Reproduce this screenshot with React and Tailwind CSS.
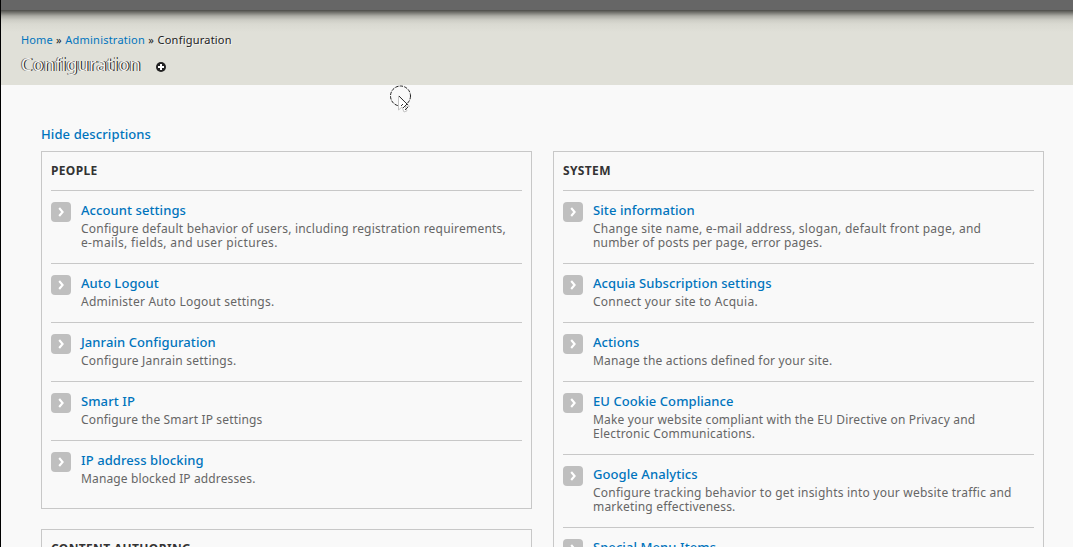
const people = [
  {
    title: "Account settings",
    lines: [
      ["Configure default behavior of users, including registration requirements,", "tracking-[0.21px]"],
      ["e-mails, fields, and user pictures.", "tracking-[0.35px]"],
    ],
  },
  { title: "Auto Logout", lines: [["Administer Auto Logout settings.", "tracking-[0.24px]"]] },
  { title: "Janrain Configuration", lines: [["Configure Janrain settings.", "tracking-[0.22px]"]] },
  { title: "Smart IP", lines: [["Configure the Smart IP settings", "tracking-[0.15px]"]] },
  { title: "IP address blocking", lines: [["Manage blocked IP addresses.", "tracking-[0.13px]"]] },
];

const system = [
  {
    title: "Site information",
    lines: [
      ["Change site name, e-mail address, slogan, default front page, and", "tracking-[0.27px]"],
      ["number of posts per page, error pages.", "tracking-[0.19px]"],
    ],
  },
  { title: "Acquia Subscription settings", lines: [["Connect your site to Acquia.", "tracking-[0.26px]"]] },
  { title: "Actions", lines: [["Manage the actions defined for your site.", "tracking-[0.19px]"]] },
  {
    title: "EU Cookie Compliance",
    lines: [
      ["Make your website compliant with the EU Directive on Privacy and", "tracking-[0.17px]"],
      ["Electronic Communications.", "tracking-[0.21px]"],
    ],
  },
  {
    title: "Google Analytics",
    lines: [
      ["Configure tracking behavior to get insights into your website traffic and", "tracking-[0.22px]"],
      ["marketing effectiveness.", "tracking-[0.18px]"],
    ],
  },
  { title: "Special Menu Items", lines: [] },
];

function Arrow() {
  return (
    <svg className="mt-[11px] h-5 w-5 shrink-0" viewBox="0 0 20 20">
      <rect width="20" height="20" rx="4" fill="#bfbfbf" />
      <path d="M8.2 6l3.4 4-3.4 4" fill="none" stroke="#fff" strokeWidth="2.1" />
    </svg>
  );
}

function Row({ item }) {
  return (
    <li className="flex gap-[10px] border-t border-[#c8c8c8] pb-[13px]">
      <Arrow />
      <div className="pt-[10px]">
        <a className="block h-[18px] text-[13px] leading-[18px] font-medium tracking-[0.08px] text-[#0074bd]">{item.title}</a>
        <div className="mt-[3px] text-[12px] leading-[14px] text-[#666]">
          {item.lines.map(([text, tracking]) => (
            <p key={text} className={`whitespace-nowrap ${tracking}`}>{text}</p>
          ))}
        </div>
      </div>
    </li>
  );
}

function Panel({ heading, items }) {
  return (
    <section className="border border-[#c8c8c8] px-[9px] pb-[9px]">
      <h3 className="h-[38px] text-[12px] leading-[38px] font-bold tracking-[0.35px] text-[#333]">{heading}</h3>
      <ul>
        {items.map((item) => (
          <Row key={item.title} item={item} />
        ))}
      </ul>
    </section>
  );
}

export default function App() {
  return (
    <div className="relative h-[547px] w-[1073px] overflow-hidden border-l border-black bg-[#f9f9f9] font-['Noto_Sans',sans-serif]">
      <div className="h-[10px] bg-[#666]" />
      <header className="h-[75px] bg-[#e0e0d8] bg-[linear-gradient(#4c4c48_0px,#7c7c76_3px,#adada6_6px,#cdcdc5_10px,#d9d9d1_14px,#e0e0d8_22px)] pl-5">
        <nav className="flex gap-[3.4px] pt-[22px] text-[11px] leading-4 tracking-[0.22px] text-[#222]">
          <a className="tracking-[0.1px] text-[#0074bd]">Home</a>
          <span>»</span>
          <a className="text-[#0074bd]">Administration</a>
          <span>»</span>
          <span className="[text-shadow:1px_1px_#f4f4f0]">Configuration</span>
        </nav>
        <div className="flex items-center pt-[2px]">
          <h1 className="h-6 text-[18px] leading-[28px] tracking-[0.25px] text-[#f4f4f0] [text-shadow:-1px_0_#666,1px_0_#111]">Configuration</h1>
          <svg className="mt-[9px] ml-[15px] h-[10px] w-[10px]" viewBox="0 0 10 10">
            <circle cx="5" cy="5" r="5" fill="#222" />
            <path d="M5 2v6M2 5h6" stroke="#fff" strokeWidth="2" />
          </svg>
        </div>
      </header>
      <main className="px-10 pt-10">
        <a className="block h-[18px] text-[13px] leading-[18px] font-medium tracking-[0.1px] text-[#0074bd]">Hide descriptions</a>
        <div className="mt-2 flex items-start gap-[21px]">
          <div className="flex w-[491px] shrink-0 flex-col gap-5">
            <Panel heading="PEOPLE" items={people} />
            <Panel heading="CONTENT AUTHORING" items={[]} />
          </div>
          <div className="w-[491px] shrink-0">
            <Panel heading="SYSTEM" items={system} />
          </div>
        </div>
      </main>
      <svg className="absolute top-[84px] left-[388px] h-[32px] w-[26px]" viewBox="0 0 26 32">
        <circle cx="11.5" cy="12" r="10" fill="none" stroke="#222" strokeDasharray="3.4 1.2" />
        <path d="M9.5 12v14l3.5-3 2 5 3-1.200-2-4.500h4.500z" fill="#fff" stroke="#c4c4c4" />
        <path d="M10 12l9 9M12 22l2-2M14 24l4-4M16 26l3-3" stroke="#333" strokeWidth="1" />
      </svg>
    </div>
  );
}
